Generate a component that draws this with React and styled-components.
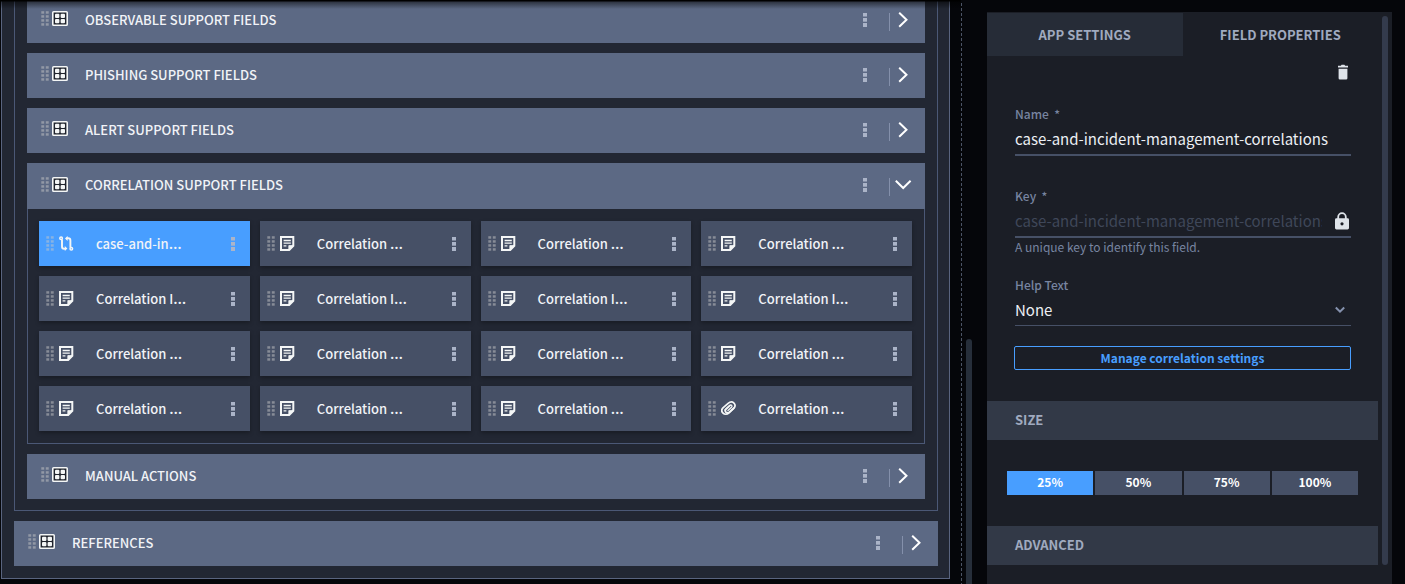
import React, { useState } from "react";
import styled, { createGlobalStyle } from "styled-components";

const font = `"Noto Sans CJK SC", "Open Sans", sans-serif`;

const GlobalStyle = createGlobalStyle`
  *, *::before, *::after { box-sizing: border-box; }
  body { margin: 0; background: #05060a; font-family: ${font}; color: #f1f3f7; }
  button, input, select { font-family: inherit; margin: 0; }
`;

const Page = styled.div`
  display: flex;
  height: 100vh;
  overflow: hidden;
`;

const Workspace = styled.main`
  flex: 1;
  min-width: 0;
  overflow: hidden;
  position: relative;
  padding: 0 11px 0 1px;
  &::after {
    content: "";
    position: absolute;
    inset: 0 0 auto 0;
    height: 9px;
    background: linear-gradient(#000000 1px, rgba(0, 0, 0, 0.5) 2px, transparent);
  }
`;

const Canvas = styled.div`
  display: flex;
  flex-direction: column;
  gap: 10px;
  margin-top: -2px;
  padding: 0 11px 12px 12px;
  background: #222733;
  border: solid #59647f;
  border-width: 0 1px 1px;
`;

const Section = styled.section`
  display: flex;
  flex-direction: column;
  gap: 10px;
  padding: 0 12px 11px 12px;
  border: solid #4b5876;
  border-width: 0 1px 1px;
`;

const Group = styled.div`
  background: #222733;
`;

const GroupBar = styled.header`
  display: flex;
  align-items: center;
  height: ${(p) => (p.$open ? 46 : 45)}px;
  padding: 0 13px 2px 14px;
  background: #5c6984;
`;

const GroupMark = styled.span`
  display: flex;
  align-items: center;
  padding-bottom: 2px;
`;

const GroupTitle = styled.h2`
  flex: 1;
  margin: 0 0 0 17px;
  font-size: 13px;
  line-height: 20px;
  font-weight: 500;
`;

const IconButton = styled.button`
  display: flex;
  align-items: center;
  justify-content: center;
  padding: 0;
  border: 0;
  background: none;
  color: ${(p) => p.$color || "#abb4c8"};
  cursor: pointer;
`;

const Divider = styled.span`
  width: 1px;
  height: 18px;
  margin: 4px 5px 0 22px;
  background: #8490ab;
`;

const CardGrid = styled.div`
  display: grid;
  grid-template-columns: repeat(4, minmax(0, 1fr));
  gap: 10px;
  padding: 12px 12px 12px 11px;
  border: solid #4b5876;
  border-width: 0 1px 1px;
`;

const Card = styled.article`
  display: flex;
  align-items: center;
  height: 45px;
  padding: 0 15px 0 7px;
  background: ${(p) => (p.$selected ? "#489eff" : "#465066")};
  box-shadow: 0 2px 4px rgba(0, 0, 0, 0.3);
`;

const CardTitle = styled.span`
  flex: 1;
  min-width: 0;
  margin-left: 22px;
  font-size: 13px;
  line-height: 20px;
  font-weight: 500;
  white-space: nowrap;
`;

const Ellipsis = styled.span`
  font-family: "Noto Sans", sans-serif;
  font-size: 16px;
  font-weight: 500;
`;

const Handle = styled.svg`
  flex: none;
  margin-right: ${(p) => p.$gap}px;
  color: rgba(200, 200, 200, 0.5);
`;

const Gutter = styled.div`
  flex: none;
  display: flex;
  gap: 4px;
  width: 26px;
`;

const Guide = styled.span`
  width: 1px;
  margin-top: 3px;
  background: repeating-linear-gradient(#4d5566 0 3px, transparent 3px 5px);
`;

const ScrollTrack = styled.span`
  display: flex;
  flex-direction: column;
  justify-content: flex-end;
  width: 6px;
`;

const ScrollThumb = styled.span`
  height: 42%;
  border-radius: 3px 3px 0 0;
  background: #262e3a;
`;

const Sidebar = styled.aside`
  flex: none;
  display: flex;
  width: 405px;
  margin: 12px 13px 0 0;
  background: #1b1e26;
`;

const SidebarBody = styled.div`
  flex: 1;
  min-width: 0;
`;

const SidebarScroll = styled.span`
  width: 6px;
  margin: 4px 4px 19px;
  border-radius: 3px;
  background: #343b4c;
`;

const Tabs = styled.div`
  display: grid;
  grid-template-columns: 1fr 1fr;
  padding-top: 1px;
`;

const Tab = styled.button`
  height: 43px;
  padding: 0;
  border: 0;
  background: ${(p) => (p.$active ? "transparent" : "#262c37")};
  color: #a0aabf;
  font-size: 13px;
  line-height: 20px;
  font-weight: 700;
  cursor: pointer;
`;

const Form = styled.form`
  display: flex;
  flex-direction: column;
  padding: 8px 27px 31px 28px;
`;

const FormActions = styled.div`
  display: flex;
  justify-content: flex-end;
  padding-right: 2px;
  margin-bottom: 25px;
`;

const Field = styled.div`
  display: flex;
  flex-direction: column;
  margin-bottom: ${(p) => p.$space}px;
`;

const Label = styled.label`
  color: #7885a1;
  font-size: 12px;
  line-height: 18px;
  font-weight: 500;
  white-space: pre;
`;

const Control = styled.div`
  display: flex;
  align-items: center;
  height: ${(p) => (p.$thin ? 32 : 33)}px;
  border-bottom: ${(p) => (p.$thin ? 1 : 2)}px solid #465066;
`;

const Input = styled.input`
  flex: 1;
  min-width: 0;
  height: 30px;
  padding: 0;
  border: 0;
  outline: 0;
  background: none;
  color: #eceff4;
  font-size: 15px;
  &:disabled { color: #3f4759; margin-right: 12px; }
`;

const Select = styled.select`
  flex: 1;
  height: 30px;
  padding: 0;
  border: 0;
  outline: 0;
  appearance: none;
  background: none;
  color: #eceff4;
  font-size: 15px;
`;

const Hint = styled.span`
  color: #7885a1;
  font-size: 12px;
  line-height: 18px;
`;

const OutlineButton = styled.button`
  height: 24px;
  margin: 0 0 0 -1px;
  padding: 0;
  border: 1px solid #489eff;
  border-radius: 2px;
  background: none;
  color: #489eff;
  font-size: 12px;
  line-height: 20px;
  font-weight: 700;
  cursor: pointer;
`;

const PanelHeading = styled.h3`
  height: 39px;
  margin: 0;
  padding: 0 28px;
  background: #323947;
  color: #a0aabf;
  font-size: 13px;
  line-height: 38px;
  font-weight: 700;
`;

const SizeOptions = styled.div`
  display: grid;
  grid-template-columns: repeat(4, 1fr);
  gap: 2px;
  padding: 31px 20px;
`;

const SizeButton = styled.button`
  height: 24px;
  padding: 0 0 2px;
  border: 0;
  background: ${(p) => (p.$active ? "#489eff" : "#465066")};
  color: #ffffff;
  font-size: 12px;
  line-height: 20px;
  font-weight: 700;
  cursor: pointer;
`;

const DragHandle = ({ gap }) => (
  <Handle $gap={gap} width="8" height="15" viewBox="0 0 8 15" fill="currentColor" aria-hidden="true">
    {[0, 4, 8, 12].map((y) => (
      <g key={y}>
        <rect x="0.3" y={y + 0.2} width="2.9" height="2.5" />
        <rect x="4.8" y={y + 0.2} width="2.9" height="2.5" />
      </g>
    ))}
  </Handle>
);

const GroupIcon = () => (
  <svg width="16" height="15" viewBox="0 0 16 15" aria-hidden="true">
    <rect x="0.8" y="0.8" width="14.4" height="13.4" rx="0.8" fill="#20242d" stroke="#f4f6f6" strokeWidth="1.6" />
    <g fill="#f4f6f6">
      <rect x="3" y="2.8" width="4.4" height="4.1" rx="1" />
      <rect x="8.6" y="2.8" width="4.4" height="4.1" rx="1" />
      <rect x="3" y="8.1" width="4.4" height="4.1" rx="1" />
      <rect x="8.6" y="8.1" width="4.4" height="4.1" rx="1" />
    </g>
  </svg>
);

const NoteIcon = () => (
  <svg width="15" height="15" viewBox="0 0 15 15" fill="none" stroke="#f4f6f6" aria-hidden="true">
    <path d="M1 1h12.3v8.8L9.2 14H1z" strokeWidth="2" />
    <path d="M8.8 14.3V9.6h4.8z" fill="#f4f6f6" strokeWidth="0.8" />
    <path d="M3.6 4.5h7.2M3.6 7.2h7.2M3.6 9.9h2.8" strokeWidth="1.3" />
  </svg>
);

const CorrelationIcon = () => (
  <svg width="15" height="15" viewBox="0 0 15 15" fill="none" stroke="#f4f6f6" strokeWidth="1.9" aria-hidden="true">
    <circle cx="2.1" cy="2.2" r="1.3" strokeWidth="1.5" />
    <circle cx="12.3" cy="12.8" r="1.3" strokeWidth="1.5" />
    <path d="M3 3.4v7q0 2.3 2.1 2.3h1.4" />
    <path d="M11.4 11.6v-7q0-2.3-2.1-2.3H7.9" />
    <path d="M5.8 10.1v5L8.4 12.6zM8.6-.1v5L6 2.4z" fill="#f4f6f6" stroke="none" />
  </svg>
);

const ClipIcon = () => (
  <svg width="15" height="15" viewBox="0 0 16 15" fill="none" stroke="#f4f6f6" strokeWidth="1.9" strokeLinecap="round" aria-hidden="true">
    <path d="M12.9 7.9 8.2 12.4C6.6 13.9 3.8 14.1 2.2 12.4.5 10.7.6 8.3 2.1 6.8L7.6 2C9.7.3 12.3.3 13.8 1.7c1.6 1.5 1.6 3.8 0 5.4" />
    <path d="M13.6 7.2 9 11.4c-1 .9-2.7 1-3.7.1-1-1-.9-2.5.1-3.5l4-3.6" />
    <path d="M7.4 9.7 11.2 6.1c.7-.7.7-1.4.1-2-.6-.5-1.4-.4-2 .2L4.2 9" strokeWidth="1.4" />
  </svg>
);

const MoreIcon = () => (
  <svg width="4" height="14" viewBox="0 0 4 14" fill="currentColor" aria-hidden="true">
    <rect width="4" height="3.5" />
    <rect y="5" width="4" height="3.7" />
    <rect y="10" width="4" height="4" />
  </svg>
);

const ChevronIcon = ({ open }) => (
  <svg width="17" height="16" viewBox="0 0 17 16" fill="none" stroke="currentColor" strokeWidth="2" aria-hidden="true">
    <path d={open ? "M.8 3.8 8.2 11l7.4-7.2" : "M4.2.7 11.5 7.7 4.2 14.7"} />
  </svg>
);

const TrashIcon = () => (
  <svg width="12" height="16" viewBox="0 0 12 16" fill="currentColor" aria-hidden="true">
    <path d="M1 1.8h2.8L4.6.8h2.8l.8 1H11v1.6H1zM1.6 4.8h8.8v9.4q0 1.3-1.3 1.3H2.9q-1.3 0-1.3-1.3z" />
  </svg>
);

const LockIcon = styled.svg`
  flex: none;
  margin-right: 1px;
`;

const Lock = () => (
  <LockIcon width="16" height="18" viewBox="0 0 16 18" aria-hidden="true">
    <path d="M4.2 7V5a3.8 3.8 0 0 1 7.6 0v2" fill="none" stroke="#dfe4ea" strokeWidth="1.8" />
    <rect x="1" y="6.2" width="14" height="11.3" rx="1.4" fill="#dfe4ea" />
    <circle cx="8" cy="11.8" r="1.6" fill="#1b1e26" />
  </LockIcon>
);

const SelectChevron = styled.svg`
  flex: none;
  margin: 0 6px 0 -10px;
  pointer-events: none;
`;

const cardIcons = { note: NoteIcon, correlation: CorrelationIcon, clip: ClipIcon };

const correlationFields = [
  { title: "case-and-in", icon: "correlation" },
  { title: "Correlation " },
  { title: "Correlation " },
  { title: "Correlation " },
  { title: "Correlation I" },
  { title: "Correlation I" },
  { title: "Correlation I" },
  { title: "Correlation I" },
  { title: "Correlation " },
  { title: "Correlation " },
  { title: "Correlation " },
  { title: "Correlation " },
  { title: "Correlation " },
  { title: "Correlation " },
  { title: "Correlation " },
  { title: "Correlation ", icon: "clip" },
];

const FieldGroup = ({ title, open = false, children }) => (
  <Group>
    <GroupBar $open={open}>
      <GroupMark>
        <DragHandle gap={3} />
        <GroupIcon />
      </GroupMark>
      <GroupTitle>{title}</GroupTitle>
      <IconButton type="button" aria-label={`${title} menu`}>
        <MoreIcon />
      </IconButton>
      <Divider />
      <IconButton type="button" $color="#ffffff" aria-expanded={open} aria-label={`Toggle ${title}`}>
        <ChevronIcon open={open} />
      </IconButton>
    </GroupBar>
    {children}
  </Group>
);

const FieldCard = ({ title, icon = "note", selected }) => {
  const Icon = cardIcons[icon];
  return (
    <Card $selected={selected}>
      <DragHandle gap={5} />
      <Icon />
      <CardTitle>
        {title}
        <Ellipsis>…</Ellipsis>
      </CardTitle>
      <IconButton type="button" aria-label="Field menu">
        <MoreIcon />
      </IconButton>
    </Card>
  );
};

export default function App() {
  const [size, setSize] = useState("25%");
  const [name, setName] = useState("case-and-incident-management-correlations");

  return (
    <>
      <GlobalStyle />
      <Page>
        <Workspace>
          <Canvas>
            <Section>
              <FieldGroup title="OBSERVABLE SUPPORT FIELDS" />
              <FieldGroup title="PHISHING SUPPORT FIELDS" />
              <FieldGroup title="ALERT SUPPORT FIELDS" />
              <FieldGroup title="CORRELATION SUPPORT FIELDS" open>
                <CardGrid>
                  {correlationFields.map((field, i) => (
                    <FieldCard key={i} {...field} selected={i === 0} />
                  ))}
                </CardGrid>
              </FieldGroup>
              <FieldGroup title="MANUAL ACTIONS" />
            </Section>
            <FieldGroup title="REFERENCES" />
          </Canvas>
        </Workspace>
        <Gutter>
          <Guide />
          <ScrollTrack>
            <ScrollThumb />
          </ScrollTrack>
        </Gutter>
        <Sidebar>
          <SidebarBody>
            <Tabs role="tablist">
              <Tab type="button" role="tab" aria-selected="false">APP SETTINGS</Tab>
              <Tab type="button" role="tab" aria-selected="true" $active>FIELD PROPERTIES</Tab>
            </Tabs>
            <Form onSubmit={(e) => e.preventDefault()}>
              <FormActions>
                <IconButton type="button" $color="#dfe4ea" aria-label="Delete field">
                  <TrashIcon />
                </IconButton>
              </FormActions>
              <Field $space={31}>
                <Label htmlFor="field-name">{"Name  *"}</Label>
                <Control>
                  <Input id="field-name" value={name} onChange={(e) => setName(e.target.value)} />
                </Control>
              </Field>
              <Field $space={20}>
                <Label htmlFor="field-key">{"Key  *"}</Label>
                <Control>
                  <Input id="field-key" value={name} disabled readOnly />
                  <Lock />
                </Control>
                <Hint>A unique key to identify this field.</Hint>
              </Field>
              <Field $space={20}>
                <Label htmlFor="help-text">Help Text</Label>
                <Control $thin>
                  <Select id="help-text" defaultValue="None">
                    <option>None</option>
                  </Select>
                  <SelectChevron width="10" height="8" viewBox="0 0 10 8" fill="none" stroke="#8591ad" strokeWidth="2" aria-hidden="true">
                    <path d="M.8 1.5 5 5.7l4.2-4.2" />
                  </SelectChevron>
                </Control>
              </Field>
              <OutlineButton type="button">Manage correlation settings</OutlineButton>
            </Form>
            <PanelHeading>SIZE</PanelHeading>
            <SizeOptions role="group" aria-label="Size">
              {["25%", "50%", "75%", "100%"].map((value) => (
                <SizeButton
                  key={value}
                  type="button"
                  $active={size === value}
                  aria-pressed={size === value}
                  onClick={() => setSize(value)}
                >
                  {value}
                </SizeButton>
              ))}
            </SizeOptions>
            <PanelHeading>ADVANCED</PanelHeading>
          </SidebarBody>
          <SidebarScroll />
        </Sidebar>
      </Page>
    </>
  );
}
